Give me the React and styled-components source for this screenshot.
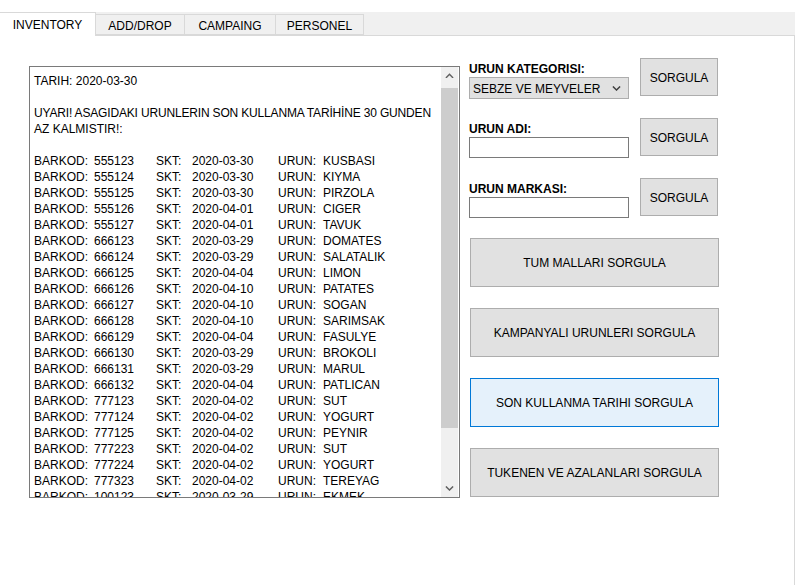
import React from 'react';
import styled, { createGlobalStyle } from 'styled-components';

const GlobalStyle = createGlobalStyle`
  html, body {
    margin: 0;
    padding: 0;
    background: #ffffff;
  }
  body {
    font-family: 'Liberation Sans', Arial, sans-serif;
    font-size: 12px;
    color: #000000;
  }
`;

const Window = styled.div`
  width: 795px;
  height: 585px;
  display: flex;
  flex-direction: column;
  padding-top: 12px;
  box-sizing: border-box;
  overflow: hidden;
`;

const TabStrip = styled.div`
  display: flex;
  align-items: flex-end;
  height: 23px;
  background: #f0f0f0;
  position: relative;
  z-index: 1;
`;

const Tab = styled.div`
  width: ${(p) => p.$w}px;
  height: ${(p) => (p.$active ? 24 : 21)}px;
  margin-bottom: ${(p) => (p.$active ? -1 : 0)}px;
  box-sizing: border-box;
  display: flex;
  align-items: center;
  justify-content: center;
  padding-top: ${(p) => (p.$active ? 0 : 2)}px;
  background: ${(p) => (p.$active ? '#ffffff' : '#f0f0f0')};
  border: 1px solid #d9d9d9;
  border-left: ${(p) => (p.$first ? 'none' : '1px solid #d9d9d9')};
  border-bottom: ${(p) => (p.$active ? 'none' : '1px solid #d9d9d9')};
  margin-left: ${(p) => (p.$first ? 0 : -1)}px;
  font-size: 12px;
  color: #000;
`;

const TabPage = styled.div`
  flex: 1;
  width: 795px;
  box-sizing: border-box;
  background: #ffffff;
  border-top: 1px solid #d9d9d9;
  border-right: 1px solid #d9d9d9;
  display: flex;
  align-items: flex-start;
  padding-left: 29px;
`;

const TextBox = styled.div`
  margin-top: 30px;
  width: 431px;
  height: 432px;
  box-sizing: border-box;
  border: 1px solid #7a7a7a;
  display: flex;
  background: #ffffff;
`;

const TextArea = styled.div`
  flex: 1;
  overflow: hidden;
  padding: 6px 0 0 4px;
  line-height: 16px;
  font-size: 12px;
  white-space: nowrap;
`;

const Line = styled.div`
  height: 16px;
  letter-spacing: ${(p) => (p.$tight ? '-0.17px' : 'normal')};
`;

const Row = styled.div`
  display: grid;
  grid-template-columns: 60px 62px 36px 86px 45px auto;
  height: 16px;
`;

const ScrollBar = styled.div`
  width: 17px;
  margin-right: 1px;
  background: #f0f0f0;
  display: flex;
  flex-direction: column;
`;

const ScrollArrow = styled.div`
  height: 17px;
  display: flex;
  align-items: center;
  justify-content: center;
`;

const ScrollTrack = styled.div`
  flex: 1;
  display: flex;
  flex-direction: column;
  padding: 4px 0 0;
`;

const ScrollThumb = styled.div`
  height: 340px;
  background: #cdcdcd;
`;

const SidePanel = styled.div`
  margin-top: 22px;
  margin-left: 9px;
  display: flex;
  flex-direction: column;
  gap: 22px;
`;

const FieldRow = styled.div`
  display: grid;
  grid-template-columns: 160px 78px;
  column-gap: 11px;
  height: 38px;
`;

const Field = styled.div`
  padding-top: 4px;
  display: flex;
  flex-direction: column;
`;

const Label = styled.div`
  font-weight: bold;
  font-size: 12px;
  line-height: 14px;
  height: 14px;
  margin-bottom: 1px;
  color: #000;
`;

const Combo = styled.div`
  height: 22px;
  box-sizing: border-box;
  background: #e1e1e1;
  border: 1px solid #adadad;
  display: flex;
  align-items: center;
  justify-content: space-between;
  padding: 1px 7px 0 3px;
  font-size: 12px;
`;

const Input = styled.div`
  height: 21px;
  box-sizing: border-box;
  background: #ffffff;
  border: 1px solid #7a7a7a;
`;

const Button = styled.div`
  box-sizing: border-box;
  height: ${(p) => p.$h || 38}px;
  padding-top: ${(p) => (p.$h ? 1 : 2)}px;
  background: ${(p) => (p.$focused ? '#e5f1fb' : '#e1e1e1')};
  border: 1px solid ${(p) => (p.$focused ? '#0078d7' : '#adadad')};
  display: flex;
  align-items: center;
  justify-content: center;
  font-size: 12px;
  color: #000;
`;

const BigButtons = styled.div`
  display: flex;
  flex-direction: column;
  gap: 21px;
  margin-left: 1px;
  width: 249px;
`;

const Chevron = ({ up, color = '#606060', size = 9 }) => (
  <svg width={size} height={size * 0.6} viewBox="0 0 10 6">
    <path
      d={up ? 'M1 5.5 L5 1.5 L9 5.5' : 'M1 0.5 L5 4.5 L9 0.5'}
      fill="none"
      stroke={color}
      strokeWidth="1.6"
    />
  </svg>
);

const items = [
  ['555123', '2020-03-30', 'KUSBASI'],
  ['555124', '2020-03-30', 'KIYMA'],
  ['555125', '2020-03-30', 'PIRZOLA'],
  ['555126', '2020-04-01', 'CIGER'],
  ['555127', '2020-04-01', 'TAVUK'],
  ['666123', '2020-03-29', 'DOMATES'],
  ['666124', '2020-03-29', 'SALATALIK'],
  ['666125', '2020-04-04', 'LIMON'],
  ['666126', '2020-04-10', 'PATATES'],
  ['666127', '2020-04-10', 'SOGAN'],
  ['666128', '2020-04-10', 'SARIMSAK'],
  ['666129', '2020-04-04', 'FASULYE'],
  ['666130', '2020-03-29', 'BROKOLI'],
  ['666131', '2020-03-29', 'MARUL'],
  ['666132', '2020-04-04', 'PATLICAN'],
  ['777123', '2020-04-02', 'SUT'],
  ['777124', '2020-04-02', 'YOGURT'],
  ['777125', '2020-04-02', 'PEYNIR'],
  ['777223', '2020-04-02', 'SUT'],
  ['777224', '2020-04-02', 'YOGURT'],
  ['777323', '2020-04-02', 'TEREYAG'],
  ['100123', '2020-03-29', 'EKMEK'],
];

const tabs = [
  { name: 'INVENTORY', w: 96 },
  { name: 'ADD/DROP', w: 90 },
  { name: 'CAMPAING', w: 92 },
  { name: 'PERSONEL', w: 89 },
];

export default function App() {
  return (
    <Window>
      <GlobalStyle />
      <TabStrip>
        {tabs.map((t, i) => (
          <Tab key={t.name} $w={t.w} $active={i === 0} $first={i === 0}>
            {t.name}
          </Tab>
        ))}
      </TabStrip>
      <TabPage>
        <TextBox>
          <TextArea>
            <Line>TARIH: 2020-03-30</Line>
            <Line />
            <Line $tight>UYARI! ASAGIDAKI URUNLERIN SON KULLANMA TARİHİNE 30 GUNDEN</Line>
            <Line>AZ KALMISTIR!:</Line>
            <Line />
            {items.map(([code, date, name]) => (
              <Row key={code + name}>
                <span>BARKOD:</span>
                <span>{code}</span>
                <span>SKT:</span>
                <span>{date}</span>
                <span>URUN:</span>
                <span>{name}</span>
              </Row>
            ))}
          </TextArea>
          <ScrollBar>
            <ScrollArrow>
              <Chevron up />
            </ScrollArrow>
            <ScrollTrack>
              <ScrollThumb />
            </ScrollTrack>
            <ScrollArrow>
              <Chevron />
            </ScrollArrow>
          </ScrollBar>
        </TextBox>
        <SidePanel>
          <FieldRow>
            <Field>
              <Label>URUN KATEGORISI:</Label>
              <Combo>
                <span>SEBZE VE MEYVELER</span>
                <Chevron size={9} color="#404040" />
              </Combo>
            </Field>
            <Button>SORGULA</Button>
          </FieldRow>
          <FieldRow>
            <Field>
              <Label>URUN ADI:</Label>
              <Input />
            </Field>
            <Button>SORGULA</Button>
          </FieldRow>
          <FieldRow>
            <Field>
              <Label>URUN MARKASI:</Label>
              <Input />
            </Field>
            <Button>SORGULA</Button>
          </FieldRow>
          <BigButtons>
            <Button $h={49}>TUM MALLARI SORGULA</Button>
            <Button $h={49}>KAMPANYALI URUNLERI SORGULA</Button>
            <Button $h={49} $focused>SON KULLANMA TARIHI SORGULA</Button>
            <Button $h={49}>TUKENEN VE AZALANLARI SORGULA</Button>
          </BigButtons>
        </SidePanel>
      </TabPage>
    </Window>
  );
}
